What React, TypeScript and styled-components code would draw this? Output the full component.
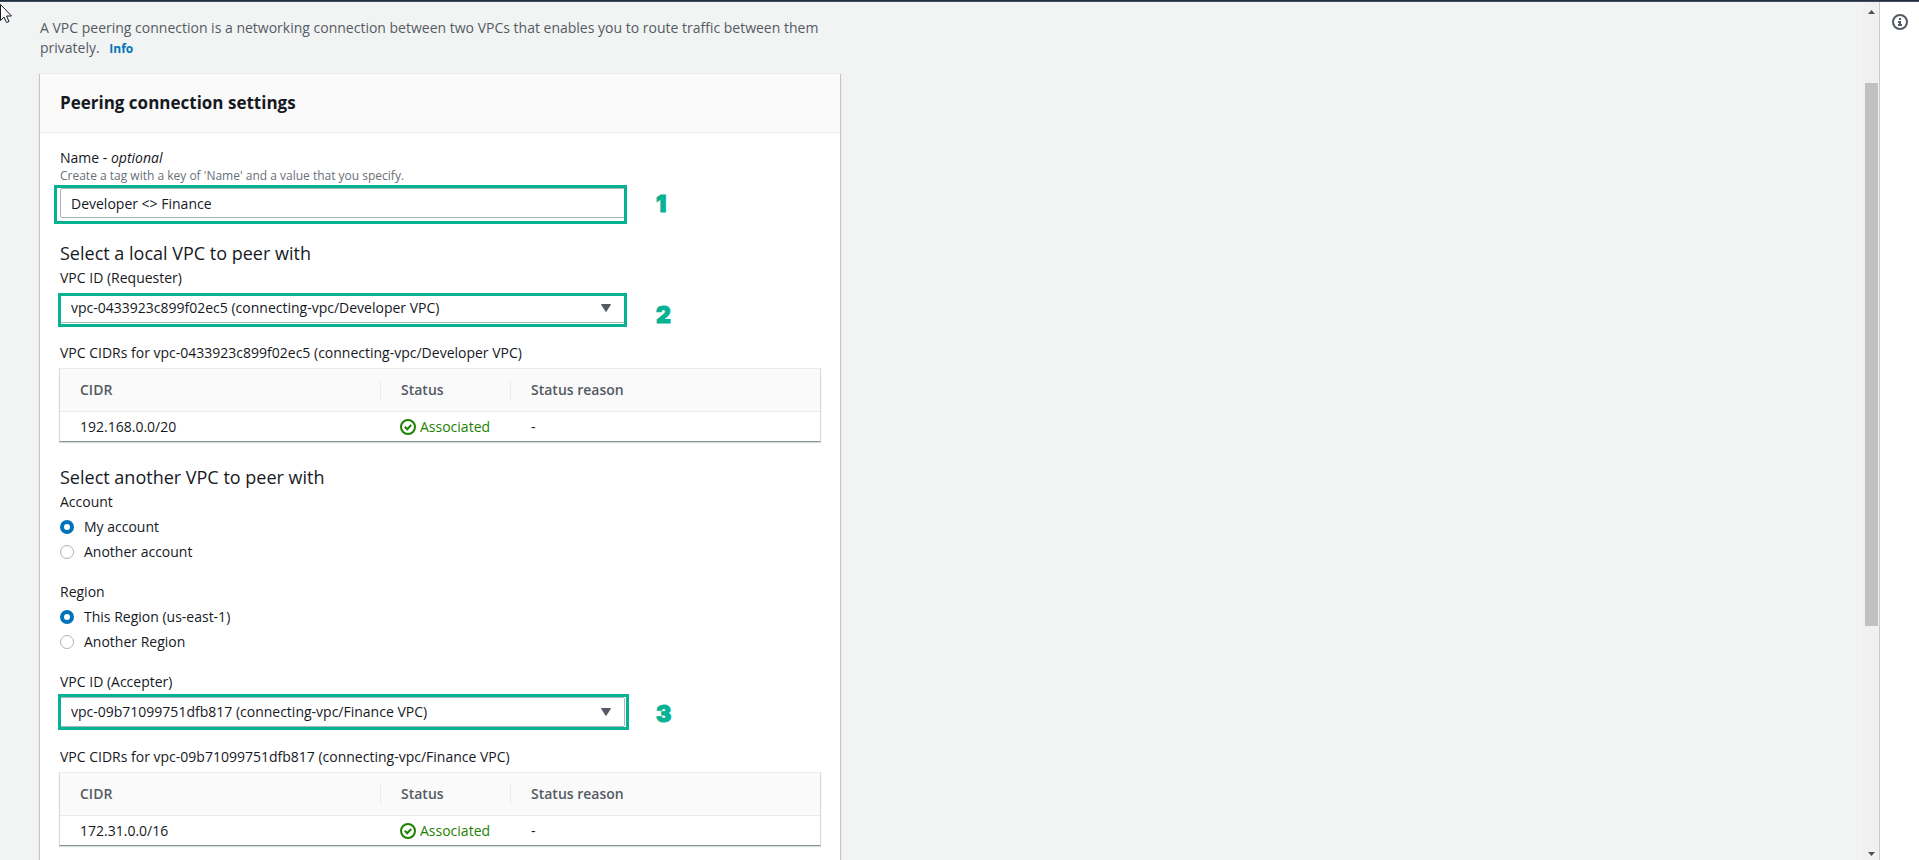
import React, { useId, useState } from "react";
import styled, { createGlobalStyle } from "styled-components";

const GlobalStyle = createGlobalStyle`
  *, *::before, *::after { box-sizing: border-box; }
  body {
    margin: 0;
    background: #f2f3f3;
    color: #16191f;
    font: 14px/20px "Open Sans", "Noto Sans", sans-serif;
  }
`;

const Page = styled.div`
  display: flex;
  flex-direction: column;
  height: 100vh;
  overflow: hidden;
`;

const TopBar = styled.header`
  flex: none;
  height: 2px;
  background: #232f3e;
  border-bottom: 1px solid #414d5c;
`;

const Shell = styled.div`
  display: flex;
  flex: 1;
  min-height: 0;
`;

const Main = styled.main`
  display: flex;
  flex-direction: column;
  flex: 1;
  min-width: 0;
  overflow: hidden;
  padding: 16px 40px 0;
`;

const Intro = styled.p`
  flex: none;
  max-width: 800px;
  margin: 0 0 15px;
  color: #545b64;
`;

const InfoLink = styled.a`
  margin-left: 6px;
  color: #0073bb;
  font-size: 12px;
  line-height: 16px;
  font-weight: 700;
  text-decoration: none;
`;

const Card = styled.form`
  flex: 1 0 auto;
  max-width: 800px;
  background: #fff;
  border-top: 1px solid #eaeded;
  box-shadow: 0 1px 1px rgba(0, 28, 36, 0.3), 1px 1px 1px rgba(0, 28, 36, 0.15),
    -1px 1px 1px rgba(0, 28, 36, 0.15);
`;

const CardHeader = styled.div`
  padding: 17px 20px;
  background: #fafafa;
  border-bottom: 1px solid #eaeded;
`;

const CardTitle = styled.h2`
  margin: 0;
  font-size: 17px;
  line-height: 24px;
  font-weight: 700;
`;

const CardBody = styled.div`
  display: flex;
  flex-direction: column;
  gap: 24px;
  padding: 15px 20px 24px;
`;

const Section = styled.section`
  display: flex;
  flex-direction: column;
  gap: 20px;
`;

const SectionTitle = styled.h3`
  margin: 0 0 -16px;
  font-size: 18px;
  line-height: 22px;
  font-weight: 400;
`;

const Field = styled.div`
  display: flex;
  flex-direction: column;
  gap: 5px;
`;

const LabelGroup = styled.div`
  display: flex;
  flex-direction: column;
`;

const Hint = styled.span`
  color: #687078;
  font-size: 12px;
  line-height: 15px;
`;

const ControlRow = styled.div`
  position: relative;
  max-width: 565px;
`;

const controlBox = `
  display: block;
  width: 100%;
  height: 30px;
  padding: 0 10px;
  border: 1px solid #aab7b8;
  border-radius: 2px;
  background: #fff;
  color: #16191f;
  font: inherit;
  outline: none;
`;

const TextInput = styled.input`
  ${controlBox}
`;

const Select = styled.select`
  ${controlBox}
  appearance: none;
`;

const Caret = styled.svg`
  position: absolute;
  top: 11px;
  right: 14px;
  pointer-events: none;
`;

const Highlight = styled.span<{ $inset: string }>`
  position: absolute;
  inset: ${(p) => p.$inset};
  border: 3px solid #05b294;
  pointer-events: none;
`;

const StepNumber = styled.span<{ $top: number }>`
  position: absolute;
  top: ${(p) => p.$top}px;
  left: calc(100% + 31px);
  color: #05b294;
  font: 900 23px/24px Inter, sans-serif;
  -webkit-text-stroke: 1px #05b294;
`;

const TableFrame = styled.div`
  margin: 0 -1px;
  border: 1px solid #d5dbdb;
  border-top-color: #eaeded;
  border-bottom-color: #879596;
  box-shadow: 0 1px 1px rgba(0, 28, 36, 0.15);
`;

const Table = styled.table`
  width: 100%;
  table-layout: fixed;
  border-collapse: collapse;
  text-align: left;
`;

const HeadCell = styled.th<{ $width?: string }>`
  position: relative;
  width: ${(p) => p.$width ?? "auto"};
  height: 42px;
  padding: 0 20px;
  background: #fafafa;
  border-bottom: 1px solid #eaeded;
  color: #545b64;
  font-weight: 600;

  &:not(:last-child)::after {
    content: "";
    position: absolute;
    top: 11px;
    right: 0;
    bottom: 10px;
    border-right: 1px solid #eaeded;
  }
`;

const Cell = styled.td`
  height: 30px;
  padding: 2px 20px 0;
`;

const Status = styled.span`
  display: flex;
  align-items: center;
  gap: 4px;
  margin-left: -1px;
  color: #1d8102;
`;

const RadioGroup = styled.fieldset`
  display: flex;
  flex-direction: column;
  gap: 5px;
  margin: 0;
  padding: 0;
  border: 0;

  legend {
    padding: 0;
    margin-bottom: 5px;
  }
`;

const RadioLabel = styled.label`
  display: flex;
  align-items: center;
  gap: 10px;
`;

const Radio = styled.input`
  appearance: none;
  width: 14px;
  height: 14px;
  margin: 0;
  border: 1px solid #aab7b8;
  border-radius: 50%;
  background: #fff;

  &:checked {
    border: 4px solid #0073bb;
  }
`;

const ScrollTrack = styled.div`
  display: flex;
  flex-direction: column;
  align-items: center;
  width: 16px;
  padding: 8px 0 4px;
  background: #f0f0f0;
`;

const ScrollSpace = styled.div<{ $grow: number }>`
  flex: ${(p) => p.$grow} 1 0;
`;

const ScrollThumb = styled.div`
  flex: 543 1 0;
  align-self: flex-end;
  width: 14px;
  background: #c1c1c1;
  border-right: 1px solid #f0f0f0;
`;

const HelpRail = styled.aside`
  display: flex;
  flex-direction: column;
  align-items: center;
  width: 40px;
  padding-top: 12px;
  background: #fff;
  border-left: 1px solid #c6cccc;
`;

const IconButton = styled.button`
  display: flex;
  margin-left: 1px;
  padding: 0;
  border: 0;
  background: none;
  color: #545b64;
`;

const Pointer = styled.svg`
  position: absolute;
  top: 4px;
  left: 0;
  pointer-events: none;
`;

type VpcFieldProps = {
  label: string;
  vpc: string;
  highlight: string;
  step: number;
  stepTop: number;
};

function VpcSelect({ label, vpc, highlight, step, stepTop }: VpcFieldProps) {
  const id = useId();
  return (
    <Field>
      <label htmlFor={id}>{label}</label>
      <ControlRow>
        <Select id={id} defaultValue={vpc}>
          <option value={vpc}>{vpc}</option>
        </Select>
        <Caret width="10" height="8" viewBox="0 0 10 8" aria-hidden="true">
          <path d="M0.5 0.5h9L5 7.5z" fill="#545b64" stroke="#545b64" strokeLinejoin="round" />
        </Caret>
        <Highlight $inset={highlight} />
        <StepNumber $top={stepTop}>{step}</StepNumber>
      </ControlRow>
    </Field>
  );
}

function CidrTable({ vpc, cidr }: { vpc: string; cidr: string }) {
  const title = `VPC CIDRs for ${vpc}`;
  return (
    <Field>
      <div>{title}</div>
      <TableFrame>
        <Table aria-label={title}>
          <thead>
            <tr>
              <HeadCell scope="col" $width="321px">CIDR</HeadCell>
              <HeadCell scope="col" $width="130px">Status</HeadCell>
              <HeadCell scope="col">Status reason</HeadCell>
            </tr>
          </thead>
          <tbody>
            <tr>
              <Cell>{cidr}</Cell>
              <Cell>
                <Status>
                  <svg width="16" height="16" viewBox="0 0 16 16" fill="none" stroke="currentColor" strokeWidth="2" aria-hidden="true">
                    <circle cx="8" cy="8" r="7" />
                    <path d="M4.8 7.8l2.4 2.4 4-4.2" />
                  </svg>
                  Associated
                </Status>
              </Cell>
              <Cell>-</Cell>
            </tr>
          </tbody>
        </Table>
      </TableFrame>
    </Field>
  );
}

function Choice({ legend, name, options }: { legend: string; name: string; options: string[] }) {
  const [picked, setPicked] = useState(options[0]);
  return (
    <RadioGroup>
      <legend>{legend}</legend>
      {options.map((option) => (
        <RadioLabel key={option}>
          <Radio type="radio" name={name} checked={picked === option} onChange={() => setPicked(option)} />
          {option}
        </RadioLabel>
      ))}
    </RadioGroup>
  );
}

const requester = "vpc-0433923c899f02ec5 (connecting-vpc/Developer VPC)";
const accepter = "vpc-09b71099751dfb817 (connecting-vpc/Finance VPC)";

export default function App() {
  return (
    <>
      <GlobalStyle />
      <Page>
        <TopBar />
        <Shell>
          <Main>
            <Intro>
              A VPC peering connection is a networking connection between two VPCs that enables you to
              route traffic between them privately. <InfoLink href="#info">Info</InfoLink>
            </Intro>
            <Card>
              <CardHeader>
                <CardTitle>Peering connection settings</CardTitle>
              </CardHeader>
              <CardBody>
                <Field>
                  <LabelGroup>
                    <label htmlFor="peering-name">
                      Name - <em>optional</em>
                    </label>
                    <Hint id="peering-hint">Create a tag with a key of 'Name' and a value that you specify.</Hint>
                  </LabelGroup>
                  <ControlRow>
                    <TextInput id="peering-name" aria-describedby="peering-hint" defaultValue="Developer <> Finance" />
                    <Highlight $inset="-3px -2px -6px -6px" />
                    <StepNumber $top={4}>1</StepNumber>
                  </ControlRow>
                </Field>

                <Section>
                  <SectionTitle>Select a local VPC to peer with</SectionTitle>
                  <VpcSelect label="VPC ID (Requester)" vpc={requester} highlight="0 -2px -4px -2px" step={2} stepTop={10} />
                  <CidrTable vpc={requester} cidr="192.168.0.0/20" />
                </Section>

                <Section>
                  <SectionTitle>Select another VPC to peer with</SectionTitle>
                  <Choice legend="Account" name="account" options={["My account", "Another account"]} />
                  <Choice legend="Region" name="region" options={["This Region (us-east-1)", "Another Region"]} />
                  <VpcSelect label="VPC ID (Accepter)" vpc={accepter} highlight="-3px -4px -3px -2px" step={3} stepTop={5} />
                  <CidrTable vpc={accepter} cidr="172.31.0.0/16" />
                </Section>
              </CardBody>
            </Card>
          </Main>
          <ScrollTrack aria-hidden="true">
            <svg width="7" height="4" viewBox="0 0 7 4">
              <path d="M0 4L3.500 0L7 4z" fill="#505050" />
            </svg>
            <ScrollSpace $grow={69} />
            <ScrollThumb />
            <ScrollSpace $grow={226} />
            <svg width="7" height="4" viewBox="0 0 7 4">
              <path d="M0 0h7L3.500 4z" fill="#505050" />
            </svg>
          </ScrollTrack>
          <HelpRail>
            <IconButton type="button" aria-label="Open help panel">
              <svg width="16" height="16" viewBox="0 0 16 16" aria-hidden="true">
                <circle cx="8" cy="8" r="7" fill="none" stroke="currentColor" strokeWidth="2" />
                <path d="M7 4h2v2H7zM6 7h3v3h1v2H6v-2h1V9H6z" fill="currentColor" />
              </svg>
            </IconButton>
          </HelpRail>
        </Shell>
        <Pointer width="13" height="20" viewBox="0 0 13 20" aria-hidden="true">
          <path d="M0.500 0.500v16l3.500-3.500 2.500 5.500 2.500-1-2.500-5.500h5z" fill="#fff" stroke="#1a1a2a" />
        </Pointer>
      </Page>
    </>
  );
}
